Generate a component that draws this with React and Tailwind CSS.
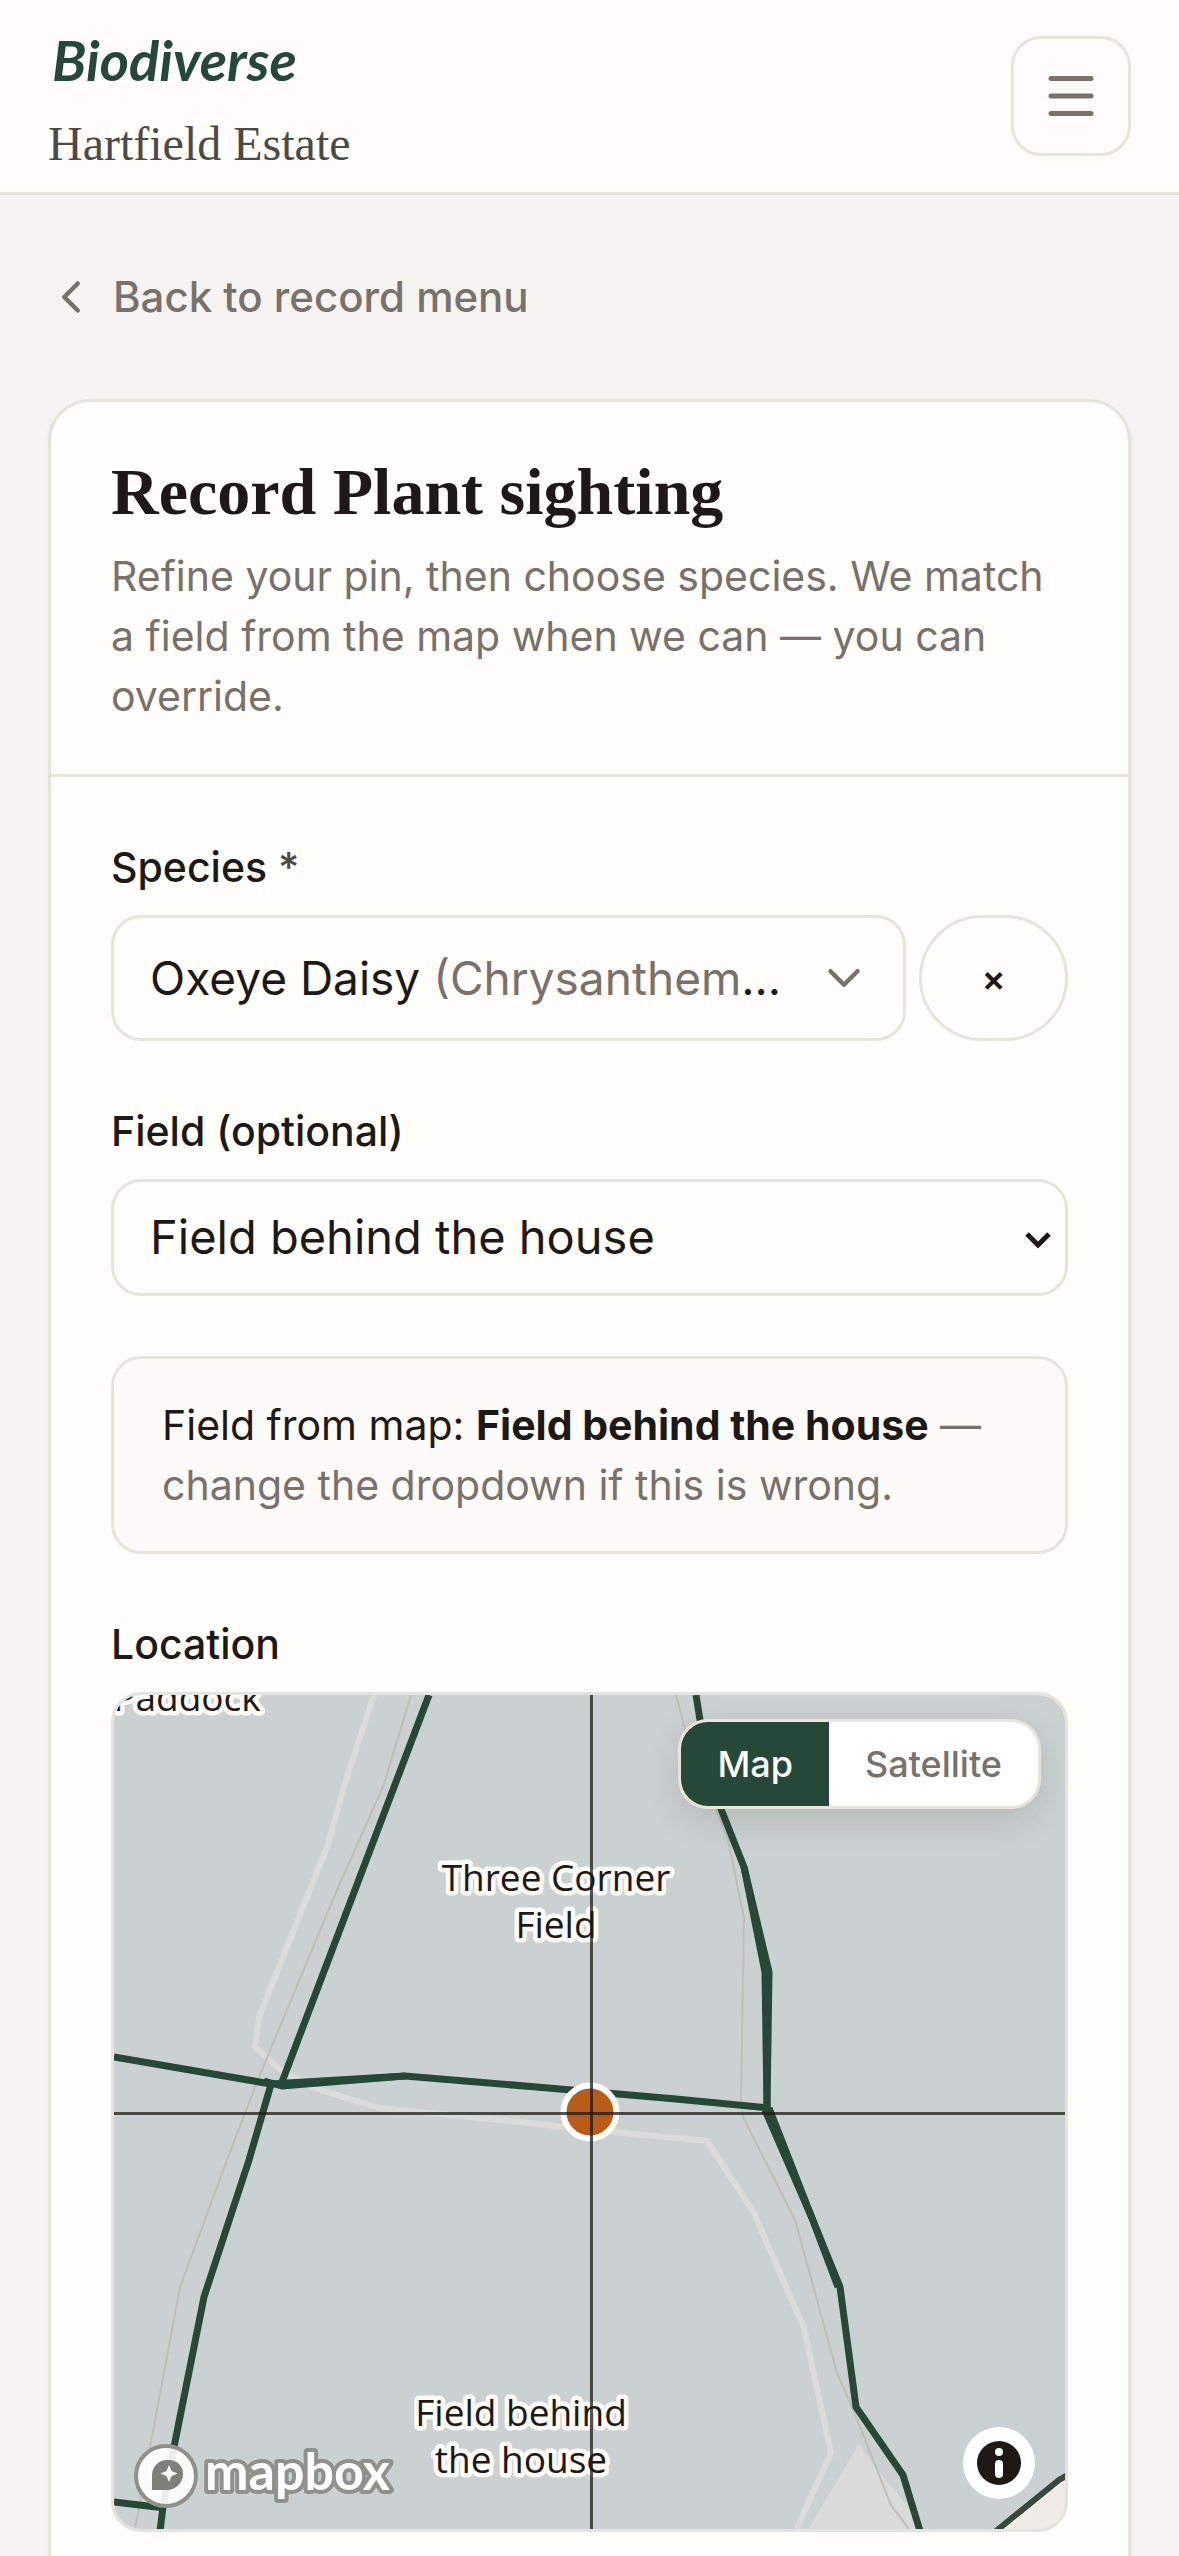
import { useState } from 'react'
import { ChevronDown, ChevronLeft, Menu } from 'lucide-react'

const FIELDS = ['Field behind the house', 'Three Corner Field', 'Paddock']

const LAYERS = [
    { id: 'map', label: 'Map' },
    { id: 'satellite', label: 'Satellite' }
]

function SiteHeader() {
    return (
        <header className="flex items-center justify-between border-b-3 border-[#e5e4dd] bg-[#fefdfa] px-12 py-3">
            <div className="flex flex-col">
                <a href="#home" className="pl-1 font-[Lato,sans-serif] text-[56px] leading-[96px] font-bold text-[#264838] italic">
                    Biodiverse
                </a>
                <span className="font-['Liberation_Serif',serif] text-[48px] leading-[72px] text-[#4b4a46]">
                    Hartfield Estate
                </span>
            </div>
            <button
                type="button"
                aria-label="Open menu"
                className="flex size-30 items-center justify-center rounded-[30px] border-3 border-[#e5e4dd] text-[#78716c]"
            >
                <Menu className="size-15" />
            </button>
        </header>
    )
}

function FieldLabel({ htmlFor, children }) {
    return (
        <label htmlFor={htmlFor} className="mb-[18px] block text-[41px] leading-[60px] font-medium">
            {children}
        </label>
    )
}

function MapLabel({ x, y, lines }) {
    return (
        <text
            x={x}
            textAnchor="middle"
            fill="#1c1917"
            stroke="#fcfbf8"
            strokeWidth="9"
            strokeLinejoin="round"
            paintOrder="stroke"
            className="font-['Open_Sans',sans-serif] text-[37px]"
        >
            {lines.map((line, i) => (
                <tspan key={line} x={x} y={y + i * 47}>{line}</tspan>
            ))}
        </text>
    )
}

function FieldMap() {
    return (
        <svg viewBox="0 0 951 834" preserveAspectRatio="xMidYMid slice" className="block h-full w-full" aria-hidden="true">
            <rect width="951" height="834" fill="#cbd1d0" />
            <path d="M745 749 694 834h111l-11-22-28-34z" fill="#d8dbda" />

            {/* Tracks */}
            <g fill="none" stroke="#d9dcdb" strokeWidth="6" strokeLinejoin="round">
                <path d="M260 0 232 85l-19 67-68 170-4 30 28 25 31 16 65 20 141 14 93 10 94 9 47 72 50 115 27 125-35 77" />
            </g>
            <g fill="none" stroke="#bdbfbb" strokeWidth="2">
                <path d="M297 0 269 92l-49 110-75 180-32 83-47 127-30 160-15 82" />
                <path d="M562 0 572 38l42 107 16 78-3 182 2 17 52 103 42 153 15 34 39 98 18 24" />
            </g>

            {/* Field boundaries */}
            <path d="M951 782 945 785 884 834h67z" fill="#efebe7" />
            <path d="M955 779 945 785 882 836" fill="none" stroke="#38483f" strokeWidth="6" />
            <g fill="none" stroke="#264838" strokeWidth="7" strokeLinejoin="miter">
                <path d="M315 0 168 387" />
                <path d="M0 362 157 389 291 381 458 395 562 404 656 413" />
                <path d="M158 386 135 465 90 602 60 752 49 812 46 836" />
                <path d="M0 807 51 813" />
                <path d="M150 386 168 391 291 381" />
                <path d="M582 0 586 25 607 114 630 172 655 277 653 413" />
                <path d="M630 172 651 277 653 413" />
                <path d="M651 415 698 523 726 592 742 712 789 780 806 836" />
                <path d="M655 413 698 523 724 592" />
            </g>

            <MapLabel x={73} y={16} lines={['Paddock']} />
            <MapLabel x={442} y={196} lines={['Three Corner', 'Field']} />
            <MapLabel x={407} y={731} lines={['Field behind', 'the house']} />
        </svg>
    )
}

function MapboxLogo() {
    return (
        <svg width="280" height="68" viewBox="0 0 280 68" className="block">
            <circle cx="34" cy="34" r="30" fill="#ffffff" fillOpacity="0.9" stroke="#90908d" strokeWidth="4" />
            <path d="M20 48V33a15 15 0 0 1 15-15h2a14 14 0 0 1 14 14 16 16 0 0 1-16 16z" fill="#7d807d" />
            <path d="m37 23 2.500 6 6 2.500-6 2.500-2.500 6-2.500-6-6-2.500 6-2.500z" fill="#ffffff" />
            <text
                x="73"
                y="48"
                fill="#ffffff"
                stroke="#90908d"
                strokeWidth="8"
                strokeLinejoin="round"
                paintOrder="stroke"
                className="font-[Lato,sans-serif] text-[52px] font-bold"
            >
                mapbox
            </text>
        </svg>
    )
}

function LocationMap() {
    const [layer, setLayer] = useState('map')

    return (
        <div className="relative h-[840px] overflow-hidden rounded-[30px] border-3 border-[#e5e3dd]">
            <FieldMap />

            {/* Pin with the crosshair drawn over it */}
            <div className="absolute top-1/2 left-1/2 size-[59px] -translate-1/2 rounded-full border-6 border-white bg-[#b85c18]" />
            <div className="absolute inset-y-0 left-1/2 w-[3px] bg-[#1c1917]/75" />
            <div className="absolute inset-x-0 top-1/2 h-[3px] bg-[#1c1917]/75" />

            <div className="absolute top-6 right-6 flex h-[90px] overflow-hidden rounded-[30px] border-3 border-[#e7e4de] bg-white text-[36px] font-medium shadow-[0_12px_36px_rgba(28,25,23,0.12)]">
                {LAYERS.map(({ id, label }) => (
                    <button
                        key={id}
                        type="button"
                        aria-pressed={layer === id}
                        onClick={() => setLayer(id)}
                        className={layer === id ? 'bg-[#264838] px-9 text-white' : 'px-9 text-[#78716c]'}
                    >
                        {label}
                    </button>
                ))}
            </div>

            <a href="#mapbox" aria-label="Mapbox" className="absolute bottom-[19px] left-[18px]">
                <MapboxLogo />
            </a>

            <button
                type="button"
                aria-label="Toggle attribution"
                className="absolute right-[30px] bottom-[30px] flex size-[72px] items-center justify-center rounded-full bg-white"
            >
                <svg width="44" height="44" viewBox="0 0 44 44">
                    <circle cx="22" cy="22" r="22" fill="#1c1917" />
                    <circle cx="22" cy="11" r="4" fill="#ffffff" />
                    <rect x="18" y="19" width="8" height="18" rx="4" fill="#ffffff" />
                </svg>
            </button>
        </div>
    )
}

export default function App() {
    const [field, setField] = useState(FIELDS[0])

    return (
        <div className="flex min-h-screen flex-col bg-[#f5f4f0] font-[Inter,sans-serif] text-[#1c1917]">
            <SiteHeader />

            <main className="flex flex-1 flex-col px-12">
                <a href="#record" className="-ml-1 flex items-center gap-[15px] self-start py-18 text-[42px] leading-[60px] font-medium text-[#78716c]">
                    <ChevronLeft className="size-[54px]" />
                    Back to record menu
                </a>

                <section className="flex-1 rounded-t-[42px] border-3 border-b-0 border-[#e5e4dd] bg-[#fffefb] shadow-[0_3px_6px_rgba(28,25,23,0.06)]">
                    <div className="border-b-3 border-[#e5e4dd] px-15 py-12">
                        <h1 className="mb-3 font-['Liberation_Serif',serif] text-[66px] leading-[84px] font-bold">
                            Record Plant sighting
                        </h1>
                        <p className="text-[41px] leading-[60px] text-[#78716c]">
                            Refine your pin, then choose species. We match a field from the map when we can — you can override.
                        </p>
                    </div>

                    <form className="flex flex-col gap-15 px-15 pt-15 pb-6" onSubmit={(e) => e.preventDefault()}>
                        <div>
                            <FieldLabel htmlFor="species">
                                Species <span className="text-[#4b4a46]">*</span>
                            </FieldLabel>
                            <div className="flex h-[126px] gap-[13px]">
                                <button
                                    id="species"
                                    type="button"
                                    aria-haspopup="listbox"
                                    className="flex min-w-0 flex-1 items-center gap-[30px] rounded-[30px] border-3 border-[#e5e4dd] pr-8 pl-9 text-left text-[46px]"
                                >
                                    <span className="min-w-0 flex-1 truncate">
                                        Oxeye Daisy <span className="text-[#78716c]">(Chrysanthemum leucanthemum)</span>
                                    </span>
                                    <ChevronDown className="size-[54px] shrink-0 text-[#78716c]" />
                                </button>
                                <button
                                    type="button"
                                    aria-label="Clear species"
                                    className="w-[149px] rounded-full border-3 border-[#e5e4dd] text-[36px] font-semibold"
                                >
                                    ×
                                </button>
                            </div>
                        </div>

                        <div>
                            <FieldLabel htmlFor="field">Field (optional)</FieldLabel>
                            <div className="relative">
                                <select
                                    id="field"
                                    value={field}
                                    onChange={(e) => setField(e.target.value)}
                                    className="block h-[117px] w-full appearance-none rounded-[30px] border-3 border-[#e5e4dd] bg-transparent px-9 text-[47px]"
                                >
                                    {FIELDS.map((name) => (
                                        <option key={name}>{name}</option>
                                    ))}
                                </select>
                                <svg width="26" height="18" viewBox="0 0 26 18" fill="none" className="pointer-events-none absolute top-[52px] right-[17px]">
                                    <path d="m2 3 11 11L24 3" stroke="#1c1917" strokeWidth="5" />
                                </svg>
                            </div>
                        </div>

                        <p className="rounded-[30px] border-3 border-[#e5e4dd] bg-[#fcfbf8] px-12 py-9 text-[41px] leading-[60px] text-[#78716c]">
                            <span className="text-[#1c1917]">
                                Field from map: <strong className="font-bold">{field}</strong>
                            </span>{' '}
                            — change the dropdown if this is wrong.
                        </p>

                        <div role="group" aria-labelledby="location-label">
                            <div id="location-label" className="mb-[18px] text-[41px] leading-[60px] font-medium">
                                Location
                            </div>
                            <LocationMap />
                        </div>
                    </form>
                </section>
            </main>
        </div>
    )
}
